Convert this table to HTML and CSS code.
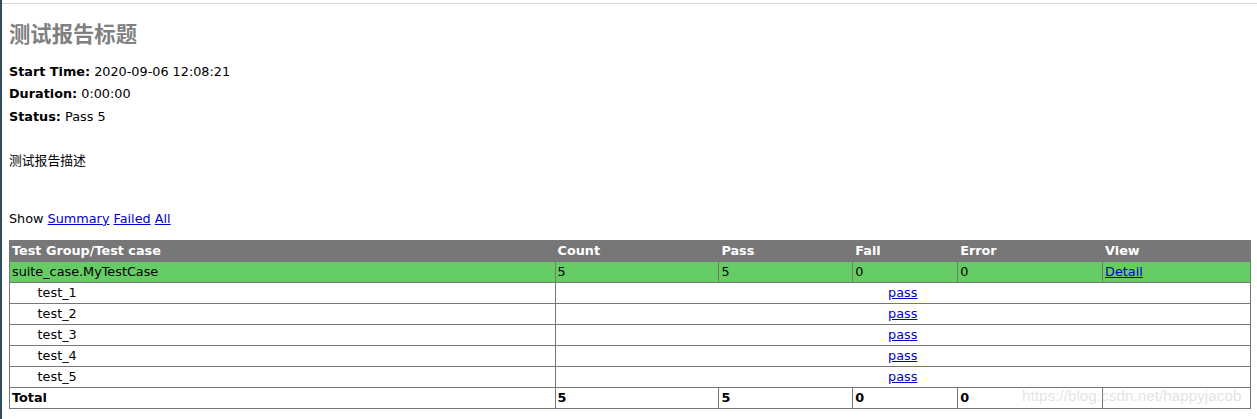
FILE: index.html
```html
<!DOCTYPE html>
<html lang="zh">
<head>
<meta charset="utf-8">
<title>测试报告标题</title>
<link rel="stylesheet" href="styles.css">
</head>
<body>
<div class="page">
  <div class="topbar"></div>
  <div class="heading">
    <h1>测试报告标题</h1>
    <p class="attribute"><strong>Start Time:</strong> 2020-09-06 12:08:21</p>
    <p class="attribute"><strong>Duration:</strong> 0:00:00</p>
    <p class="attribute"><strong>Status:</strong> Pass 5</p>
    <p class="description">测试报告描述</p>
  </div>
  <p class="show-line">Show <a href="#">Summary</a> <a href="#">Failed</a> <a href="#">All</a></p>
  <table class="result-table">
    <colgroup>
      <col class="c1"><col class="c2"><col class="c3"><col class="c4"><col class="c5"><col class="c6">
    </colgroup>
    <tr class="header-row">
      <td>Test Group/Test case</td>
      <td>Count</td>
      <td>Pass</td>
      <td>Fail</td>
      <td>Error</td>
      <td>View</td>
    </tr>
    <tr class="pass-class">
      <td>suite_case.MyTestCase</td>
      <td>5</td>
      <td>5</td>
      <td>0</td>
      <td>0</td>
      <td><a href="#">Detail</a></td>
    </tr>
    <tr><td><div class="testcase">test_1</div></td><td colspan="5" class="center"><a href="#" class="popup-link">pass</a></td></tr>
    <tr><td><div class="testcase">test_2</div></td><td colspan="5" class="center"><a href="#" class="popup-link">pass</a></td></tr>
    <tr><td><div class="testcase">test_3</div></td><td colspan="5" class="center"><a href="#" class="popup-link">pass</a></td></tr>
    <tr><td><div class="testcase">test_4</div></td><td colspan="5" class="center"><a href="#" class="popup-link">pass</a></td></tr>
    <tr><td><div class="testcase">test_5</div></td><td colspan="5" class="center"><a href="#" class="popup-link">pass</a></td></tr>
    <tr class="total-row">
      <td>Total</td>
      <td>5</td>
      <td>5</td>
      <td>0</td>
      <td>0</td>
      <td>&nbsp;</td>
    </tr>
  </table>
  <div class="watermark">https://blog.csdn.net/happyjacob</div>
</div>
</body>
</html>
```
FILE: styles.css
```css
html, body {
  margin: 0;
  padding: 0;
  background: #fff;
}
body {
  font-family: "DejaVu Sans", Verdana, "Noto Sans CJK SC", sans-serif;
  font-size: 12.8px;
  color: #000;
}
.page {
  position: relative;
  min-height: 419px;
  box-sizing: border-box;
  padding: 0 5px 0 7px;
  border-left: 2px solid #2f4d5c;
}
.topbar {
  height: 3px;
  border-bottom: 1px solid #d6d6d6;
  margin: 0 -5px 0 -7px;
}
h1 {
  font-family: "DejaVu Sans", "Noto Sans CJK SC", sans-serif;
  font-size: 21.33px;
  line-height: 25px;
  color: gray;
  font-weight: bold;
  margin: 18px 0 0 0;
}
.heading p {
  line-height: 15px;
  margin: 0;
}
.heading .attribute {
  margin-top: 7.5px;
}
.heading .attribute:first-of-type {
  margin-top: 16.5px;
}
.heading .description {
  font-family: "DejaVu Sans", "Noto Sans CJK SC", sans-serif;
  margin-top: 29px;
}
.show-line {
  line-height: 15px;
  margin: 43px 0 0 0;
}
a {
  color: #0000cc;
}
.result-table {
  margin-top: 14.5px;
  width: 1242px;
  border-collapse: collapse;
  border: 1px solid #777;
  font-size: 12.8px;
}
.result-table td {
  border: 1px solid #777;
  padding: 2px;
  line-height: 16px;
  height: 16px;
  vertical-align: middle;
}
.c1 { width: 546px; }
.c2 { width: 164px; }
.c3 { width: 134px; }
.c4 { width: 105px; }
.c5 { width: 145px; }
.c6 { width: 148px; }
.header-row td {
  background: #777;
  color: #fff;
  font-weight: bold;
}
.pass-class td {
  background: #66cc66;
}
.testcase {
  margin-left: 25.6px;
}
.center {
  text-align: center;
}
.total-row td {
  font-weight: bold;
}
.watermark {
  position: absolute;
  left: 1020px;
  top: 387px;
  font-family: "Liberation Sans", Arial, sans-serif;
  font-size: 15.3px;
  color: rgba(170, 170, 170, 0.35);
  white-space: nowrap;
}
```
